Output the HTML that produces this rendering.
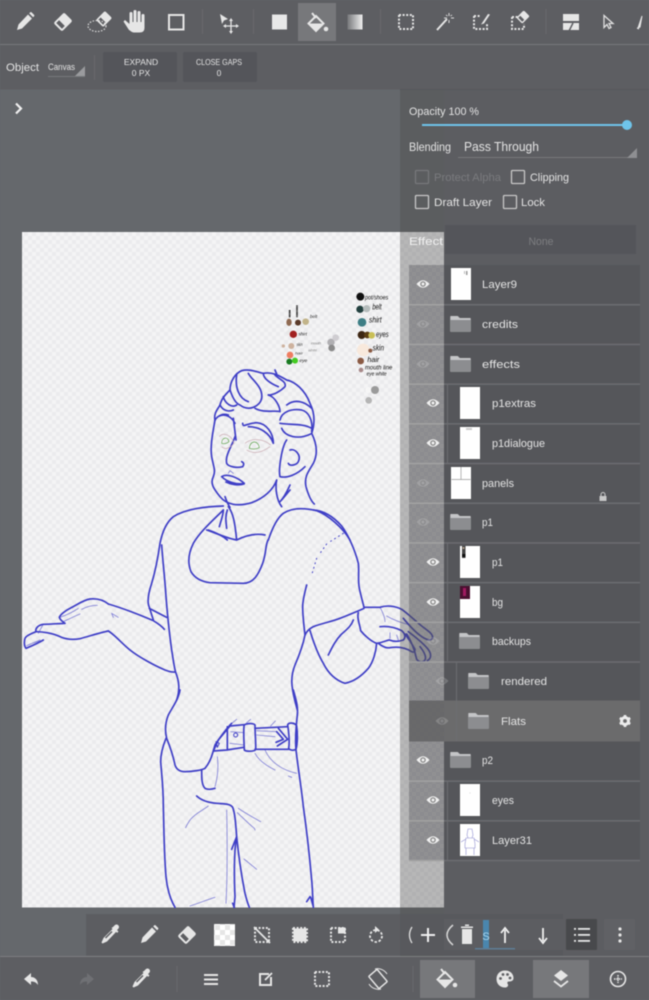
<!DOCTYPE html>
<html><head><meta charset="utf-8"><title>Layers</title>
<style>
html,body{margin:0;padding:0;background:#65686c;width:649px;height:1000px;overflow:hidden}
svg{display:block;filter:blur(.4px)}
text{font-family:"Liberation Sans",sans-serif;fill:#e4e4e4}
.ic{fill:none;stroke:#e6e6e6;stroke-width:2}
.f{fill:#e6e6e6;stroke:none}
.d{fill:none;stroke:#e6e6e6;stroke-width:2;stroke-dasharray:2 1.6}
.art{fill:none;stroke:#3e3ec6;stroke-width:5;stroke-linecap:round;stroke-linejoin:round}
.thin{stroke-width:2.6;opacity:.6}
</style></head><body>
<svg width="649" height="1000" viewBox="0 0 649 1000" xmlns="http://www.w3.org/2000/svg">
<defs>
<pattern id="chk" width="8" height="8" patternUnits="userSpaceOnUse"><rect width="8" height="8" fill="#f4f4f5"/><rect width="4" height="4" fill="#ebebed"/><rect x="4" y="4" width="4" height="4" fill="#ebebed"/></pattern>
<pattern id="chk2" width="10" height="10" patternUnits="userSpaceOnUse"><rect width="10" height="10" fill="#fff"/><rect width="5" height="5" fill="#e6e6e6"/><rect x="5" y="5" width="5" height="5" fill="#e6e6e6"/></pattern>
<linearGradient id="gr" x1="0" x2="1" y1="0" y2="0"><stop offset="0" stop-color="#77787b"/><stop offset="1" stop-color="#f0f0f0"/></linearGradient>
<g id="eye"><path d="M-6.500 0Q0-7.500 6.500 0Q0 7.500-6.500 0Z" fill="#f0f0f0"/><circle r="2.800" fill="#8a8a8a"/><circle r="1.500" fill="#f0f0f0"/></g>
<g id="folder"><path d="M-10-8h7l2 2h10a1 1 0 0 1 1 1v12a1 1 0 0 1-1 1h-19a1 1 0 0 1-1-1v-14a1 1 0 0 1 1-1z" fill="#8c8d90"/><path d="M-10.500-8h7l2 2h11v2h-20z" fill="#c4c5c7"/></g>
<g id="pencil"><path class="f" d="M-8 8l1.500-5.500L3-7.500l4 4L-3 6.500zM4.200-8.600l1-1a1 1 0 0 1 1.400 0l2.500 2.500a1 1 0 0 1 0 1.400l-1 1z"/></g>
<g id="eraser"><g transform="rotate(45)"><rect x="-5" y="-6.500" width="10" height="13" rx="1" fill="none" stroke="#e6e6e6" stroke-width="2"/><rect x="-5" y="-6.500" width="10" height="8" class="f"/></g></g>
<g id="drop"><path class="f" d="M3.500-9.500a2.500 2.500 0 0 1 4 3L6-5l1.500 1.500-1.400 1.400-1-1L-4 6.500l-4.500 2-1-1 2-4.500 9-9-1-1L2-8z"/><path d="M1-3.500L-5.500 3" stroke="#5d5e62" stroke-width="1.500"/></g>
<g id="bucket"><path d="M-1-7L6.500 0.500-1 8-8.500 0.500z" fill="none" stroke="#e6e6e6" stroke-width="2"/><path class="f" d="M-8.500.500h15L-1 8z"/><path d="M-5-10L-1-5" stroke="#e6e6e6" stroke-width="2"/><circle cx="9" cy="6" r="2.300" class="f"/></g>
<g id="dashrect"><rect x="-7" y="-7" width="14" height="14" class="d"/></g>
</defs>

<rect width="649" height="1000" fill="#65686c"/>
<rect x="22" y="232" width="422" height="675.500" fill="url(#chk)"/>

<!-- head -->
<g transform="translate(180 280) scale(.33333)">
<g class="art">
<path d="M105 420C100 400 115 385 120 375C125 355 135 345 150 330C150 305 165 280 185 272C210 265 235 278 250 280C275 275 295 285 320 300C345 305 375 330 390 370C405 400 405 430 395 460C410 490 415 520 400 550C385 575 372 590 378 620C385 645 395 665 403 672"/>
<path d="M170 285C165 320 175 355 205 365M205 280C215 300 250 320 245 355C240 380 205 395 180 375C165 370 155 345 150 330"/>
<path d="M250 280C250 295 270 310 295 320M285 270L290 282M285 285C300 300 320 305 315 320C300 335 280 345 265 345"/>
<path d="M130 350C135 370 155 385 170 375M120 375C130 395 150 395 160 390M105 420C115 405 130 400 145 405M225 385C250 400 290 390 300 395M265 345C285 350 300 380 300 395"/>
<path d="M320 375C345 355 375 365 395 385M300 420C305 395 335 385 365 390C385 395 400 420 395 455M300 430C330 435 370 430 395 445M305 445C315 470 355 480 392 462M320 480C305 500 295 570 300 590C320 595 350 585 375 560M330 510C345 505 365 525 355 545C350 555 330 560 325 550"/>
<path d="M105 420C98 460 90 500 95 530C100 560 108 570 100 590C90 610 100 625 120 650C140 675 175 680 215 668C250 655 280 630 290 600C285 625 290 660 305 680"/>
<path d="M118 408C135 400 155 410 165 430M160 415L168 480M188 430C190 445 195 430 230 428C260 430 280 460 280 490C270 460 240 440 205 440"/>
<path d="M165 470C155 500 135 525 140 550C145 560 170 565 188 560C194 552 190 547 185 545"/>
<path d="M125 590C140 580 170 590 193 610C170 615 140 605 125 590M138 606C150 612 175 618 192 612M300 665C315 650 325 625 330 615M305 660L330 630"/>
<path class="thin" d="M145 580L150 572L160 580"/>
<path d="M135 650C140 665 145 675 150 682M145 680C160 700 165 730 170 780M80 750C110 760 140 775 170 780C200 765 230 760 255 765"/>
<path d="M265 780C275 750 290 715 310 700C340 680 380 685 410 692C445 705 490 745 510 780"/>
</g>
<g fill="none" stroke-width="2">
<path stroke="#5ea04c" d="M125 490C125 470 145 470 147 485C140 492 130 492 125 490ZM208 505C210 480 235 480 238 503C228 508 218 508 208 505Z"/>
<path stroke="#c9a9b0" d="M118 470C130 455 155 465 162 490M125 500C135 510 150 505 162 490M195 490C220 470 255 480 272 495M200 510C225 525 250 515 270 500"/>
</g>
<circle cx="541" cy="50" r="12" fill="#111"/><circle cx="540" cy="88" r="11" fill="#23403f"/><circle cx="560" cy="86" r="11" fill="#b5bcbc"/><circle cx="546" cy="127" r="13" fill="#3e7e85"/>
<circle cx="545" cy="165" r="12" fill="#3d2612"/><circle cx="562" cy="165" r="10" fill="#5b3d14"/><circle cx="575" cy="166" r="10" fill="#c9bf56"/>
<circle cx="550" cy="210" r="19" fill="#f8e9dc"/><circle cx="571" cy="212" r="6" fill="#8b5a42"/><circle cx="542" cy="243" r="10" fill="#8a5a44"/><circle cx="543" cy="270" r="7" fill="#a88a8a"/>
<circle cx="565" cy="330" r="9" fill="#f6f6f6"/><circle cx="585" cy="330" r="12" fill="#9a9a9a"/><circle cx="566" cy="361" r="10" fill="#b5b5b5"/>
<ellipse cx="327" cy="127" rx="8" ry="11" fill="#8f6a52"/><circle cx="354" cy="128" r="9" fill="#5a3a2a"/><circle cx="377" cy="125" r="10" fill="#c2b48a"/>
<circle cx="325" cy="158" r="7" fill="#e8e8e8"/><circle cx="340" cy="163" r="11" fill="#a12020"/><circle cx="310" cy="198" r="5" fill="#cdb29e"/><circle cx="334" cy="198" r="9" fill="#cdb29e"/>
<circle cx="330" cy="225" r="10" fill="#ee7c60"/><circle cx="328" cy="245" r="9" fill="#197a22"/><circle cx="345" cy="242" r="9" fill="#44cc22"/>
<circle cx="453" cy="187" r="11" fill="#b0afb2"/><circle cx="467" cy="173" r="10" fill="#cfcdd1"/><circle cx="455" cy="204" r="10" fill="#8a8a8a"/>
<path d="M329 90V112M351 76V112" stroke="#222" stroke-width="5" stroke-dasharray="4 1"/>
<g style="font-style:italic">
<text x="555" y="58" font-size="20" style="fill:#111" textLength="70" lengthAdjust="spacingAndGlyphs">pot/shoes</text>
<text x="577" y="88" font-size="24" style="fill:#111" textLength="28" lengthAdjust="spacingAndGlyphs">belt</text>
<text x="567" y="128" font-size="24" style="fill:#111" textLength="38" lengthAdjust="spacingAndGlyphs">shirt</text>
<text x="588" y="171" font-size="24" style="fill:#111" textLength="38" lengthAdjust="spacingAndGlyphs">eyes</text>
<text x="578" y="212" font-size="24" style="fill:#111" textLength="34" lengthAdjust="spacingAndGlyphs">skin</text>
<text x="562" y="246" font-size="22" style="fill:#111" textLength="36" lengthAdjust="spacingAndGlyphs">hair</text>
<text x="555" y="268" font-size="20" style="fill:#111" textLength="82" lengthAdjust="spacingAndGlyphs">mouth line</text>
<text x="560" y="286" font-size="16" style="fill:#111" textLength="60" lengthAdjust="spacingAndGlyphs">eye white</text>
<text x="355" y="166" font-size="15" style="fill:#222" textLength="26" lengthAdjust="spacingAndGlyphs">shirt</text>
<text x="350" y="198" font-size="13" style="fill:#333" textLength="18" lengthAdjust="spacingAndGlyphs">skin</text>
<text x="358" y="246" font-size="14" style="fill:#222" textLength="24" lengthAdjust="spacingAndGlyphs">eye</text>
<text x="345" y="224" font-size="12" style="fill:#444" textLength="24" lengthAdjust="spacingAndGlyphs">hair</text>
<text x="390" y="114" font-size="13" style="fill:#333" textLength="22" lengthAdjust="spacingAndGlyphs">belt</text>
<text x="393" y="194" font-size="11" style="fill:#777" textLength="30" lengthAdjust="spacingAndGlyphs">mouth</text>
<text x="385" y="215" font-size="11" style="fill:#888" textLength="26" lengthAdjust="spacingAndGlyphs">white</text>
</g>
</g>

<!-- left arm & torso -->
<g transform="translate(10 500) scale(.33333)" class="art">
<path d="M640 18C590 20 530 25 490 50C465 70 455 105 450 130C445 165 437 210 425 250C415 280 410 305 418 322L430 360"/>
<path d="M455 135C458 180 465 240 468 290C472 340 478 400 485 450C490 480 492 500 497 517C508 545 510 570 500 600"/>
<path d="M640 30C610 60 570 95 550 130C535 160 533 190 543 215C555 235 575 245 600 248L700 250C730 250 745 225 758 190C770 155 765 140 774 120"/>
<path d="M595 90C610 95 635 105 652 120M652 30C645 50 648 65 650 85M628 80C632 65 640 45 640 30"/>
<path d="M418 325L470 352M295 312C340 325 390 345 430 362C440 368 455 378 463 388"/>
<path d="M295 393C315 405 335 430 360 450C385 470 430 495 465 510C475 514 485 517 495 516"/>
<path d="M295 312C280 300 260 295 240 297C220 300 200 315 180 325C165 332 150 345 148 352C150 360 158 365 165 370C140 372 115 372 100 373C85 375 75 385 78 395C65 400 48 408 45 415C42 425 42 438 48 445C60 440 80 432 100 420"/>
<path d="M78 395C100 395 130 400 150 410C165 418 190 420 210 416C240 408 270 398 295 393"/>
<path class="thin" d="M150 352C170 345 190 335 205 325M160 365C175 358 195 348 210 342M215 328C230 320 245 316 262 316M100 372L85 400M60 432L100 420M50 437L90 420M305 340L310 352M305 340L325 352M165 370L140 370"/>
</g>

<!-- right arm -->
<g transform="translate(290 510) scale(.33333)" class="art">
<path d="M70 0C100 2 130 20 155 48C175 75 195 120 205 160C208 185 203 210 208 235C212 255 218 275 222 292"/>
<path d="M160 70L120 95M110 102L90 130M80 145L65 195" stroke-dasharray="3 11" stroke-width="3"/>
<path d="M50 225C45 245 38 270 38 290C38 315 42 350 45 375C40 400 28 435 15 465C5 490 3 515 8 540C12 565 18 585 22 600"/>
<path d="M45 375C50 365 55 358 70 350C95 340 125 335 150 325C175 315 200 305 222 295"/>
<path d="M60 362C70 395 82 430 100 460C115 490 135 510 165 520C190 515 215 498 235 475C250 455 258 425 260 400"/>
<path d="M190 330C185 345 175 355 155 372C135 392 125 415 115 435"/>
<path d="M222 292C240 292 255 292 270 292C290 285 315 288 335 298C355 312 375 332 395 348C410 360 425 368 428 380C428 388 420 392 410 388C395 382 370 362 340 325"/>
<path d="M205 308C200 325 210 345 212 362C225 378 245 395 260 400C275 398 285 393 298 390C310 395 325 395 340 390C348 382 345 370 335 362C315 352 290 348 270 350"/>
<path d="M355 365C375 380 395 395 412 415C425 430 425 445 412 452M350 372C365 395 375 425 380 448C388 458 400 458 405 450C410 440 402 425 390 410M300 413C320 410 345 412 365 425C372 428 375 425 375 418C365 400 355 385 345 372M265 400C280 412 290 415 300 413"/>
<path class="thin" d="M270 292C280 310 285 325 285 335M290 318C310 330 340 340 360 345M300 385L300 368M325 390L320 375"/>
</g>

<!-- lower body -->
<g transform="translate(140 690) scale(.33333)" class="art">
<path d="M120 0C115 30 95 55 85 75C75 100 75 125 80 145C90 170 100 200 105 225C110 240 120 245 135 245C160 245 185 240 195 235C212 215 218 190 225 165C235 150 255 120 275 100"/>
<path d="M78 145C70 165 62 190 62 215C65 255 70 290 70 350C72 420 72 490 78 560C82 600 92 630 105 652"/>
<path d="M460 0C465 20 475 45 472 75C468 110 465 145 468 180C475 240 485 300 490 350C500 420 508 490 515 570C518 600 518 630 520 652M510 620L500 635M512 622L520 650"/>
<path d="M270 108L312 104M345 115L443 110M345 178L446 178M312 172L260 180L220 183L235 150L270 108M262 110L262 180"/>
<path d="M312 108C312 100 340 98 345 105C345 130 348 160 347 178C345 185 318 185 313 180C312 155 310 130 312 108Z"/>
<path d="M443 105C445 97 465 97 470 108C473 130 473 160 468 178C460 183 448 180 446 175C450 150 446 125 443 105Z"/>
<path d="M415 115L443 148L412 168M410 125L430 148L408 157"/>
<path class="thin" d="M350 122L410 125M350 135L405 140M272 125L312 128M270 160L312 165M278 98L290 88M320 98L332 88M392 108L406 93"/>
<circle cx="287" cy="135" r="6" stroke-width="3"/>
<path d="M228 155L238 160L232 172Z" stroke-width="3"/>
<path d="M170 318C185 332 205 338 230 340C250 342 270 340 278 352C285 370 287 400 290 440C282 480 282 560 285 620L282 652M290 440C295 490 305 560 315 610C320 630 325 645 328 652"/>
<path d="M290 440L275 478M278 640L283 652"/>
<path d="M185 240C185 265 185 285 195 295C205 300 215 298 225 295"/>
<path class="thin" d="M205 348C190 360 165 370 150 390C145 398 140 405 137 413M232 200C235 225 235 255 225 290M345 190C355 210 375 225 405 240M375 180C390 215 425 240 470 250M445 258L455 262M295 355C320 372 345 385 362 395M292 368C310 385 330 405 343 415L345 420M312 507L350 538M225 622C205 628 175 640 150 648M260 360C262 450 262 560 258 640"/>
</g>

<!-- top bars -->
<rect width="649" height="89.500" fill="#5d5e62"/>
<rect y="44" width="649" height="1" fill="#77787b"/>
<rect x="298" y="3" width="38" height="38" fill="#77787b"/>
<g fill="#69696d"><rect x="202" y="9" width="1" height="25"/><rect x="253" y="9" width="1" height="25"/><rect x="380" y="9" width="1" height="25"/><rect x="545.500" y="9" width="1" height="25"/><rect x="94" y="55" width="1" height="25"/></g>
<use href="#pencil" x="25" y="22"/>
<use href="#eraser" x="63" y="22"/>
<g transform="translate(100 22)"><ellipse cx="-3" cy="4" rx="9" ry="5.500" fill="none" stroke="#d8d8d8" stroke-width="1.200" stroke-dasharray="1.500 1.500"/><g transform="translate(4 -3) scale(.85)"><use href="#eraser"/></g></g>
<g transform="translate(136 22)" class="f"><rect x="-6.500" y="-10" width="3" height="13" rx="1.400"/><rect x="-2.500" y="-12" width="3" height="14" rx="1.400"/><rect x="1.500" y="-11" width="3" height="14" rx="1.400"/><rect x="5.500" y="-8" width="3" height="12" rx="1.400"/><path d="M-6.500 0H8.500V6Q8.500 10.500 3.500 10.500H-2Q-5 10.500-7 7z"/><path d="M-6.500 2L-11-2-12.500-.5-7 8-2 10.500 2 5z"/></g>
<rect x="169" y="15" width="14.500" height="14.500" class="ic"/>
<g transform="translate(228 22)"><path class="f" d="M-8-8L0-3-4-1.500-6 2z"/><path d="M3-2V10M-3 4H9" stroke="#e6e6e6" stroke-width="1.300"/><path class="f" d="M3-4L5-1H1zM3 12L1 9H5zM-5 4L-2 2V6zM11 4L8 2V6z"/></g>
<rect x="272" y="14.500" width="15" height="15" fill="#e8e8e8"/>
<use href="#bucket" x="317" y="23"/>
<rect x="347.500" y="14.500" width="15" height="15" fill="url(#gr)"/>
<use href="#dashrect" x="406" y="22"/>
<g transform="translate(444 22)"><path d="M-7 8L3-3" stroke="#e6e6e6" stroke-width="2"/><path d="M5-9V-6M5-2V1M0-4H3M7-4H10M2-7L3.500-6M8-7L6.500-6" stroke="#ddd" stroke-width="1"/></g>
<g transform="translate(481 22)"><path d="M-7-6H0M-7-6V7H6V1" class="d"/><path d="M-1 3L5-6l2 0.500-6 9-3 1z" class="f" transform="translate(2 -2)"/></g>
<g transform="translate(519 22)"><path d="M-7-5H-1M-7-5V7H5V2" class="d"/><g transform="translate(4 -5) scale(.7)"><use href="#eraser"/></g></g>
<g transform="translate(571 22)"><rect x="-8" y="-8" width="16" height="7" class="f"/><path class="f" d="M-8 1H8V8H-8z"/><path d="M2 1L-2 9" stroke="#5d5e62" stroke-width="1.500"/></g>
<path d="M603 16L603 28 606 25 608 29 610 28 608 24 612 24z" transform="translate(1 -.5)" fill="none" stroke="#e0e0e0" stroke-width="1.300"/>
<path d="M642 16L640 27 638 28z M637 28l2 1" fill="#e6e6e6" stroke="#e6e6e6"/>

<!-- option bar -->
<text x="6" y="71" font-size="11" textLength="33" lengthAdjust="spacingAndGlyphs">Object</text>
<text x="48" y="70" font-size="9" textLength="27" lengthAdjust="spacingAndGlyphs">Canvas</text>
<rect x="48" y="76" width="37" height="1" fill="#77787b"/>
<path d="M85 66V76H75z" fill="#9a9b9e"/>
<rect x="103" y="52" width="74" height="30" rx="2" fill="#54555a"/>
<rect x="183" y="52" width="74" height="30" rx="2" fill="#54555a"/>
<text x="141" y="65" font-size="8.500" text-anchor="middle">EXPAND</text>
<text x="141" y="76" font-size="8.500" text-anchor="middle">0 PX</text>
<text x="219" y="65" font-size="8.500" text-anchor="middle" textLength="46" lengthAdjust="spacingAndGlyphs">CLOSE GAPS</text>
<text x="219" y="76" font-size="8.500" text-anchor="middle">0</text>
<path d="M16 103.500L21 108.500 16 113.500" fill="none" stroke="#f0f0f0" stroke-width="2.200"/>

<!-- panel -->
<rect x="400" y="89.500" width="44" height="867" fill="#494949" fill-opacity=".355"/>
<rect x="444" y="89.500" width="205" height="867" fill="#5c5d61"/>
<rect x="400" y="89" width="249" height="1" fill="#56575b"/>
<text x="409" y="115" font-size="11" textLength="70" lengthAdjust="spacingAndGlyphs">Opacity 100 %</text>
<rect x="422" y="124" width="205" height="2" fill="#6fc4ea"/>
<circle cx="627" cy="125" r="5" fill="#6fc4ea"/>
<text x="409" y="151" font-size="11.500" textLength="42" lengthAdjust="spacingAndGlyphs">Blending</text>
<text x="464" y="151" font-size="13" textLength="75" lengthAdjust="spacingAndGlyphs">Pass Through</text>
<rect x="458" y="157" width="179" height="1" fill="#77787b"/>
<path d="M637 148V158H627z" fill="#8e8f92"/>
<rect x="415.500" y="170.500" width="13" height="13" rx="1" fill="none" stroke="#77787b" stroke-width="1.300"/>
<text x="434" y="181" font-size="11" textLength="67" lengthAdjust="spacingAndGlyphs" style="fill:#7a7b7e">Protect Alpha</text>
<rect x="511.500" y="170.500" width="13" height="13" rx="1" fill="none" stroke="#c8c8c8" stroke-width="1.300"/>
<text x="530" y="181" font-size="11" textLength="39" lengthAdjust="spacingAndGlyphs">Clipping</text>
<rect x="415.500" y="195.500" width="13" height="13" rx="1" fill="none" stroke="#c8c8c8" stroke-width="1.300"/>
<text x="434" y="206" font-size="11" textLength="58" lengthAdjust="spacingAndGlyphs">Draft Layer</text>
<rect x="503.500" y="195.500" width="13" height="13" rx="1" fill="none" stroke="#c8c8c8" stroke-width="1.300"/>
<text x="521" y="206" font-size="11" textLength="24" lengthAdjust="spacingAndGlyphs">Lock</text>
<text x="409" y="245" font-size="11" textLength="34" lengthAdjust="spacingAndGlyphs" style="fill:#f2f2f2">Effect</text>
<rect x="445" y="225" width="191" height="29" fill="#54555a"/>
<text x="541" y="245" font-size="11" text-anchor="middle" style="fill:#7d7e81" textLength="25" lengthAdjust="spacingAndGlyphs">None</text>

<!-- layer list -->
<rect x="409" y="265" width="35" height="595.500" fill="#55565a" fill-opacity=".4"/>
<rect x="444" y="265" width="196" height="595.500" fill="#55565a"/>
<rect x="409" y="700.500" width="35" height="41" fill="#58585a" fill-opacity=".7"/>
<rect x="444" y="700.500" width="196" height="41" fill="#6b6b6c"/>
<g fill="#6c6d71">
<rect x="444" y="304" width="196" height="1.500"/><rect x="444" y="343.700" width="196" height="1.500"/><rect x="444" y="383.400" width="196" height="1.500"/><rect x="444" y="423.100" width="196" height="1.500"/><rect x="444" y="462.800" width="196" height="1.500"/><rect x="444" y="502.500" width="196" height="1.500"/><rect x="444" y="542.200" width="196" height="1.500"/><rect x="444" y="581.900" width="196" height="1.500"/><rect x="444" y="621.600" width="196" height="1.500"/><rect x="444" y="661.300" width="196" height="1.500"/><rect x="444" y="780.400" width="196" height="1.500"/><rect x="444" y="820.100" width="196" height="1.500"/><rect x="444" y="859.800" width="196" height="1.500"/>
</g>
<g fill="#a2a2a2">
<rect x="409" y="304" width="35" height="1.500"/><rect x="409" y="343.700" width="35" height="1.500"/><rect x="409" y="383.400" width="35" height="1.500"/><rect x="409" y="423.100" width="35" height="1.500"/><rect x="409" y="462.800" width="35" height="1.500"/><rect x="409" y="502.500" width="35" height="1.500"/><rect x="409" y="542.200" width="35" height="1.500"/><rect x="409" y="581.900" width="35" height="1.500"/><rect x="409" y="621.600" width="35" height="1.500"/><rect x="409" y="661.300" width="35" height="1.500"/><rect x="409" y="780.400" width="35" height="1.500"/><rect x="409" y="820.100" width="35" height="1.500"/><rect x="409" y="859.800" width="35" height="1.500"/>
</g>
<g fill="#6c6d71"><rect x="447" y="384" width="1" height="79"/><rect x="447" y="543" width="1" height="118"/><rect x="447" y="781" width="1" height="79"/><rect x="456" y="662" width="1" height="79"/></g>

<!-- eyes -->
<use href="#eye" x="423" y="284"/>
<use href="#eye" x="433" y="403"/>
<use href="#eye" x="433" y="443"/>
<use href="#eye" x="433" y="562"/>
<use href="#eye" x="433" y="602"/>
<use href="#eye" x="423" y="760"/>
<use href="#eye" x="433" y="800"/>
<use href="#eye" x="433" y="840"/>
<g opacity=".2">
<use href="#eye" x="423" y="324"/><use href="#eye" x="423" y="364"/><use href="#eye" x="423" y="483"/><use href="#eye" x="423" y="522"/><use href="#eye" x="433" y="641"/><use href="#eye" x="442" y="681"/><use href="#eye" x="442" y="721"/>
</g>

<!-- thumbs -->
<rect x="451" y="268" width="20" height="32" fill="#fff"/><rect x="464" y="271" width="1" height="3" fill="#bbb"/><rect x="466" y="271" width="1.500" height="4" fill="#999"/>
<use href="#folder" x="461" y="324"/>
<use href="#folder" x="461" y="364"/>
<rect x="460" y="387" width="20" height="32" fill="#fff"/>
<rect x="460" y="427" width="20" height="32" fill="#fff"/><rect x="466" y="428" width="6" height="2" fill="#ccc"/>
<rect x="451" y="467" width="20" height="32" fill="#fff"/><path d="M451.500 479.500H470.500M461 467V479.500" stroke="#999" stroke-width=".7"/>
<use href="#folder" x="461" y="522"/>
<rect x="460" y="546" width="20" height="32" fill="#fff"/><rect x="462" y="546" width="3.500" height="12" fill="#444"/><rect x="462" y="554" width="3.500" height="3" fill="#111"/><rect x="462.500" y="547" width="2" height="2" fill="#a98"/>
<rect x="460" y="586" width="20" height="32" fill="#fff"/><rect x="460" y="586" width="10" height="13" fill="#4a1030"/><rect x="463" y="588" width="3" height="8" fill="#a01a60"/>
<use href="#folder" x="470" y="641"/>
<use href="#folder" x="479" y="681"/>
<use href="#folder" x="479" y="721"/>
<use href="#folder" x="461" y="760"/>
<rect x="460" y="784" width="20" height="32" fill="#fff"/><circle cx="470" cy="793" r=".5" fill="#ccc"/>
<rect x="460" y="824" width="20" height="32" fill="#fff"/>
<g fill="none" stroke="#9090d0" stroke-width=".6"><path d="M468 829h4l1 6-1 3h-4l-1-3zM466 838h8l1 6v4h-10v-4zM466 839l-5 3M474 839l5 3M466 848v7M474 848v7"/></g>

<!-- names -->
<text x="482" y="288" font-size="11" textLength="35" lengthAdjust="spacingAndGlyphs">Layer9</text>
<text x="482" y="328" font-size="11" textLength="36" lengthAdjust="spacingAndGlyphs">credits</text>
<text x="482" y="368" font-size="11" textLength="38" lengthAdjust="spacingAndGlyphs">effects</text>
<text x="492" y="407" font-size="11" textLength="44" lengthAdjust="spacingAndGlyphs">p1extras</text>
<text x="492" y="447" font-size="11" textLength="53" lengthAdjust="spacingAndGlyphs">p1dialogue</text>
<text x="482" y="487" font-size="11" textLength="32" lengthAdjust="spacingAndGlyphs">panels</text>
<text x="482" y="526" font-size="11" textLength="11" lengthAdjust="spacingAndGlyphs">p1</text>
<text x="492" y="566" font-size="11" textLength="11" lengthAdjust="spacingAndGlyphs">p1</text>
<text x="492" y="606" font-size="11" textLength="11" lengthAdjust="spacingAndGlyphs">bg</text>
<text x="492" y="645" font-size="11" textLength="39" lengthAdjust="spacingAndGlyphs">backups</text>
<text x="501" y="685" font-size="11" textLength="46" lengthAdjust="spacingAndGlyphs">rendered</text>
<text x="501" y="725" font-size="11" textLength="25" lengthAdjust="spacingAndGlyphs">Flats</text>
<text x="482" y="764" font-size="11" textLength="11" lengthAdjust="spacingAndGlyphs">p2</text>
<text x="492" y="804" font-size="11" textLength="22" lengthAdjust="spacingAndGlyphs">eyes</text>
<text x="492" y="844" font-size="11" textLength="40" lengthAdjust="spacingAndGlyphs">Layer31</text>

<!-- lock + gear -->
<g transform="translate(603 497)"><rect x="-3.500" y="-1" width="7" height="5" fill="#c8c8c8"/><path d="M-2-1V-2.500A2 2 0 0 1 2-2.500V-1" fill="none" stroke="#c8c8c8" stroke-width="1"/></g>
<g transform="translate(625 721)"><circle r="3.700" fill="none" stroke="#ececec" stroke-width="2.600"/><path d="M0-6V6M-5.200-3L5.200 3M-5.200 3L5.200-3" stroke="#ececec" stroke-width="2.600"/><circle r="1.900" fill="#6b6b6c"/></g>

<!-- bottom tool row -->
<rect x="86" y="914" width="314" height="41.500" fill="#5c5d61"/>
<rect x="400" y="914" width="163" height="41.500" fill="#58595d"/>
<rect x="444" y="919" width="119" height="31" fill="#5c5d61"/>
<rect x="566" y="919" width="31" height="31" rx="1" fill="#48494c"/>
<rect x="604" y="919" width="31" height="31" rx="1" fill="#606165"/>
<use href="#drop" x="111" y="935"/>
<use href="#pencil" x="149" y="935"/>
<use href="#eraser" x="187" y="935"/>
<rect x="214" y="924" width="21" height="22" fill="url(#chk2)"/>
<g transform="translate(262 935)"><use href="#dashrect"/><path d="M-8-8L8 8" stroke="#e6e6e6" stroke-width="1.800"/></g>
<g transform="translate(300 935)"><rect x="-6.500" y="-6.500" width="13" height="13" class="f"/><use href="#dashrect"/></g>
<g transform="translate(338 935)"><use href="#dashrect"/><rect x="0" y="-7.500" width="7.500" height="6" class="f"/></g>
<g transform="translate(376 935)"><circle cy="1" r="6" fill="none" stroke="#e6e6e6" stroke-width="1.800" stroke-dasharray="2.500 1.700"/><path class="f" d="M-1-9V-2L3-5.500z"/></g>
<path d="M412 927Q407 935 412 943" fill="none" stroke="#e0e0e0" stroke-width="1.300"/>
<path d="M428 928V942M421 935H435" stroke="#f0f0f0" stroke-width="2"/>
<path d="M453 925Q441 935 453 945" fill="none" stroke="#d8d8d8" stroke-width="1.500"/>
<g transform="translate(467 935)"><path class="f" d="M-5-6H5V9H-5zM-6-8.500H6V-7H-6zM-2-10.500H2V-9H-2z"/></g>
<rect x="483" y="920" width="6" height="29" fill="#4a86ad"/>
<rect x="475" y="948" width="40" height="1.500" fill="#5e7d95"/>
<text x="486" y="940" font-size="11" text-anchor="middle" style="fill:#a8d8f0">S</text>
<path d="M505 943V930M501 933L505 928 509 933" fill="none" stroke="#f0f0f0" stroke-width="1.800"/>
<path d="M543 928V941M539 938L543 943 547 938" fill="none" stroke="#f0f0f0" stroke-width="1.800"/>
<g fill="#e6e6e6"><rect x="578" y="928" width="12" height="1.800"/><rect x="578" y="934" width="12" height="1.800"/><rect x="578" y="940" width="12" height="1.800"/><rect x="574" y="928" width="2" height="1.800"/><rect x="574" y="934" width="2" height="1.800"/><rect x="574" y="940" width="2" height="1.800"/></g>
<g fill="#e6e6e6"><circle cx="620" cy="929" r="1.600"/><circle cx="620" cy="935" r="1.600"/><circle cx="620" cy="941" r="1.600"/></g>

<!-- bottom bar -->
<rect y="956" width="649" height="44" fill="#5d5e62"/>
<rect y="956" width="649" height="1" fill="#7c7d80"/>
<rect x="420" y="960" width="55" height="38" fill="#77787b"/>
<rect x="533" y="960" width="56" height="38" fill="#77787b"/>
<g fill="#69696d"><rect x="176.500" y="966" width="1" height="26"/><rect x="412.500" y="966" width="1" height="26"/></g>
<path class="f" d="M24 979L31 973V977C35 977 38 980 38 985C36 982 34 981.500 31 981.500V985z"/>
<path d="M94 979L87 973V977C83 977 80 980 80 985C82 982 84 981.500 87 981.500V985z" fill="#6f7074"/>
<use href="#drop" x="142" y="979"/>
<g fill="#e6e6e6"><rect x="204" y="974" width="14" height="2"/><rect x="204" y="978.500" width="14" height="2"/><rect x="204" y="983" width="14" height="2"/></g>
<g transform="translate(266 979)"><path d="M3-5H-6V6H5V-2" fill="none" stroke="#e6e6e6" stroke-width="2"/><path d="M-1 1L6-6" stroke="#e6e6e6" stroke-width="1.800"/></g>
<use href="#dashrect" x="322" y="979"/>
<g transform="translate(378 979)"><rect x="-5.500" y="-8" width="11" height="16" rx="1" transform="rotate(-40)" fill="none" stroke="#e6e6e6" stroke-width="1.500"/><path d="M-3-10A11 11 0 0 1 9-5M3 10A11 11 0 0 1-9 5" fill="none" stroke="#e6e6e6" stroke-width="1"/></g>
<use href="#bucket" x="446" y="979"/>
<g transform="translate(505 979)"><path class="f" d="M0-8.500C6-8.500 8.500-4.500 8.500-1C8.500 2 6 2.500 4 2.500C2 2.500 2 4 3 5.500C3.500 7 2 8.500 0 8.500C-5 8.500-8.500 5-8.500 0C-8.500-5-5-8.500 0-8.500Z"/><g fill="#5d5e62"><circle cx="-4.500" cy="-.5" r="1.400"/><circle cx="-2" cy="-4.500" r="1.400"/><circle cx="2.500" cy="-4.500" r="1.400"/><circle cx="5" cy="-1" r="1.400"/></g></g>
<g transform="translate(561 979)"><path class="f" d="M0-9L7-3.500 0 2-7-3.500z"/><path d="M-7 2L0 7.500 7 2" fill="none" stroke="#e6e6e6" stroke-width="1.800"/></g>
<g transform="translate(618 979)"><circle r="7.500" fill="none" stroke="#e6e6e6" stroke-width="1.600"/><path d="M0-4V4M-4 0H4" stroke="#e6e6e6" stroke-width="1.500" stroke-dasharray="1.500 .8"/></g>
</svg>
</body></html>
